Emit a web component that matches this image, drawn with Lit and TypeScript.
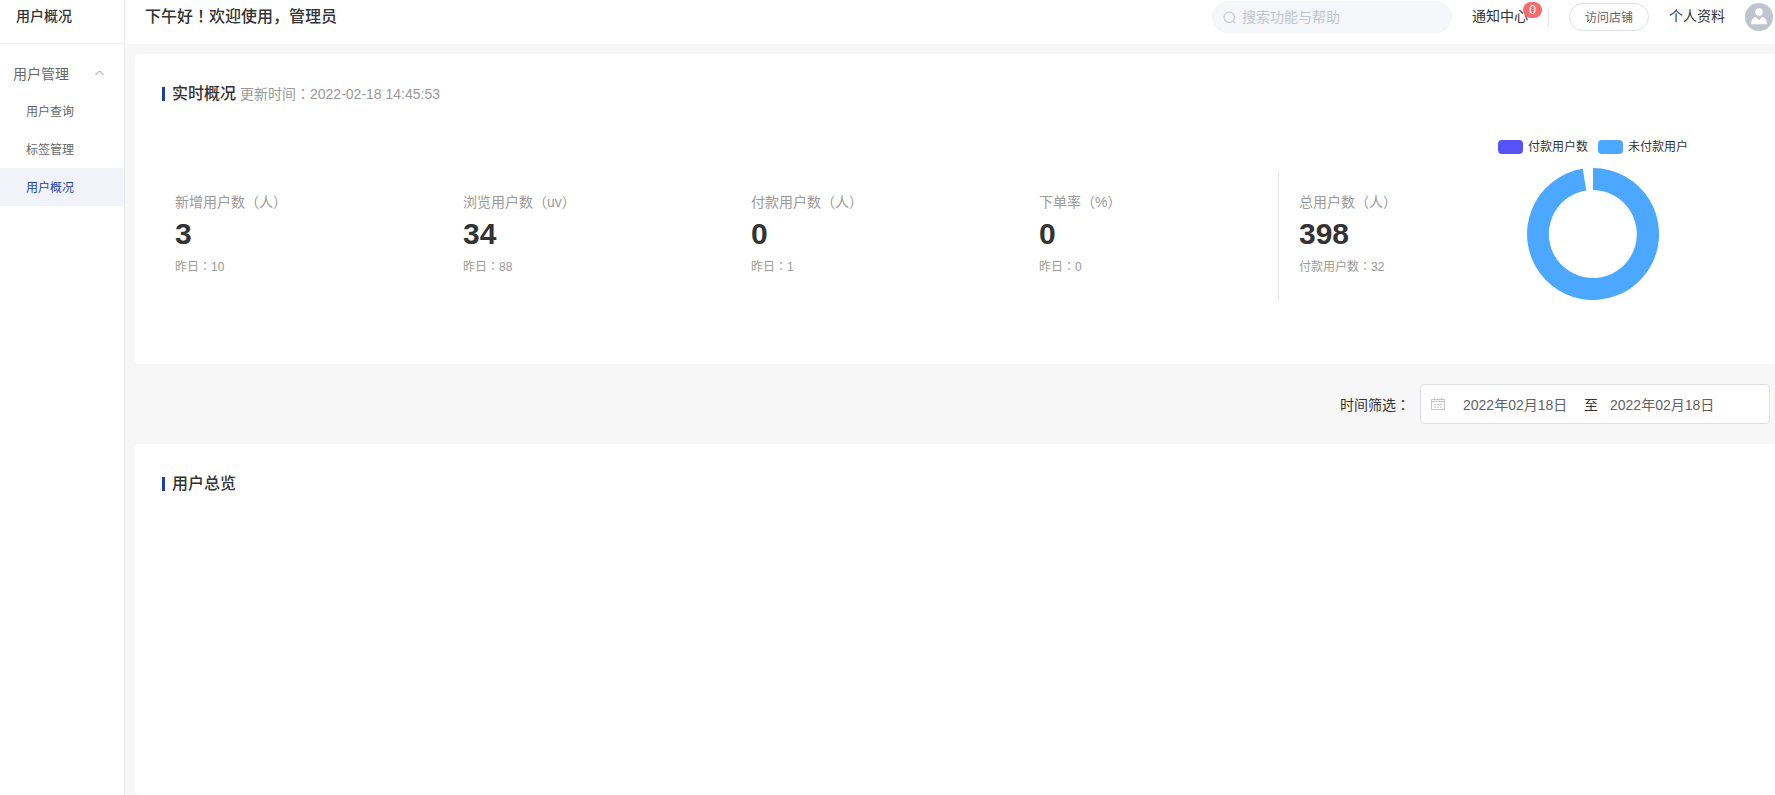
import { LitElement, html, svg, css } from "lit";
import { customElement, property, state } from "lit/decorators.js";
import { classMap } from "lit/directives/class-map.js";

interface Stat {
  label: string;
  value: number;
  note: string;
}

interface Slice {
  name: string;
  value: number;
  color: string;
}

const STATS: Stat[] = [
  { label: "新增用户数（人）", value: 3, note: "昨日：10" },
  { label: "浏览用户数（uv）", value: 34, note: "昨日：88" },
  { label: "付款用户数（人）", value: 0, note: "昨日：1" },
  { label: "下单率（%）", value: 0, note: "昨日：0" },
];

const punctStyles = css`
  .punct {
    font-family: "Noto Sans CJK TC", sans-serif;
    line-height: 1;
  }
`;

/** Sets full-width punctuation in a face that centres it in its cell. */
const centred = (text: string) =>
  text
    .split(/([！：])/)
    .map((part) => (/^[！：]$/.test(part) ? html`<span class="punct">${part}</span>` : part));

@customElement("stat-item")
export class StatItem extends LitElement {
  @property({ attribute: false }) stat!: Stat;

  static styles = [
    punctStyles,
    css`
      :host {
        display: block;
        white-space: nowrap;
        color: #999;
      }
      .label {
        font-size: 14px;
        line-height: 24px;
      }
      .value {
        font-size: 30px;
        line-height: 40px;
        font-weight: 700;
        color: #333;
      }
      .note {
        font-size: 12px;
        line-height: 26px;
      }
    `,
  ];

  render() {
    return html`
      <div class="label">${this.stat.label}</div>
      <div class="value">${this.stat.value}</div>
      <div class="note">${centred(this.stat.note)}</div>
    `;
  }
}

@customElement("ring-chart")
export class RingChart extends LitElement {
  @property({ attribute: false }) slices: Slice[] = [];

  static styles = css`
    :host {
      display: flex;
      flex-direction: column;
      align-items: center;
      gap: 13px;
    }
    .legend {
      display: flex;
      gap: 10px;
      font-size: 12px;
      line-height: 16px;
      color: #333;
      white-space: nowrap;
    }
    .entry {
      display: flex;
      align-items: center;
      gap: 5px;
    }
    .swatch {
      width: 25px;
      height: 14px;
      border-radius: 4px;
    }
    .ring {
      display: block;
      width: 132px;
      height: 132px;
    }
  `;

  render() {
    return html`
      <div class="legend">
        ${this.slices.map(
          (s) => html`<span class="entry"
            ><span class="swatch" style="background:${s.color}"></span>${s.name}</span
          >`
        )}
      </div>
      <svg class="ring" viewBox="-66 -66 132 132" role="img" aria-label="用户占比">
        ${svg`<path fill="#4ca7ff" d="M0 -66A66 66 0 1 1 -10.2 -65.2L-6.8 -43.5A44 44 0 1 0 0 -44Z" />`}
      </svg>
    `;
  }
}

@customElement("side-nav")
export class SideNav extends LitElement {
  @state() private current = "用户概况";
  @state() private open = true;

  static styles = css`
    :host {
      display: block;
      box-sizing: border-box;
      background: #fff;
      border-right: 1px solid #ebebeb;
    }
    .title {
      margin: 0;
      padding: 0 16px 11px;
      font-size: 14px;
      line-height: 32px;
      font-weight: 500;
      color: #333;
      border-bottom: 1px solid #ebebeb;
    }
    .group {
      display: flex;
      align-items: center;
      justify-content: space-between;
      width: 100%;
      margin: 12px 0 0;
      padding: 0 20px 0 13px;
      border: 0;
      background: none;
      font: inherit;
      font-size: 14px;
      line-height: 36px;
      color: #666;
      cursor: pointer;
    }
    .arrow {
      width: 9px;
      height: 9px;
      fill: none;
      stroke: #909399;
    }
    .item {
      display: block;
      padding: 2px 0 0 26px;
      font-size: 12px;
      line-height: 36px;
      color: #666;
      text-decoration: none;
    }
    .active {
      color: #1d3fad;
      background: #f2f3f8;
    }
  `;

  render() {
    return html`
      <h1 class="title">用户概况</h1>
      <button class="group" aria-expanded=${this.open} @click=${() => (this.open = !this.open)}>
        用户管理
        <svg class="arrow" viewBox="0 0 9 9"><path d="M0.5 5 4.5 1 8.5 5" /></svg>
      </button>
      ${this.open
        ? html`<nav>
            ${["用户查询", "标签管理", "用户概况"].map(
              (name) => html`<a
                href="#"
                class=${classMap({ item: true, active: name === this.current })}
                @click=${() => (this.current = name)}
                >${name}</a
              >`
            )}
          </nav>`
        : null}
    `;
  }
}

@customElement("top-bar")
export class TopBar extends LitElement {
  static styles = [
    punctStyles,
    css`
      :host {
        display: flex;
        align-items: center;
        box-sizing: border-box;
        height: 44px;
        padding: 0 2px 10px 20px;
        background: #fff;
        font-size: 14px;
        color: #333;
        white-space: nowrap;
      }
      .hello {
        flex: 1;
        margin: 0;
        font-size: 16px;
        line-height: 32px;
        font-weight: 500;
      }
      .search {
        display: flex;
        align-items: center;
        gap: 6px;
        box-sizing: border-box;
        width: 240px;
        height: 32px;
        padding: 0 11px;
        margin-right: 20px;
        border-radius: 16px;
        background: #f5f7fa;
      }
      .search svg {
        flex: none;
        width: 13px;
        height: 13px;
        fill: none;
        stroke: #c0c4cc;
        stroke-width: 1.1;
      }
      .search input {
        flex: 1;
        min-width: 0;
        padding: 0;
        border: 0;
        outline: 0;
        background: none;
        font: inherit;
        color: #606266;
      }
      .search input::placeholder {
        color: #c0c4cc;
        opacity: 1;
      }
      .link {
        position: relative;
        padding-bottom: 2px;
        line-height: 32px;
        color: #333;
        text-decoration: none;
      }
      .badge {
        position: absolute;
        top: 2px;
        right: -14px;
        padding: 0 6px;
        border-radius: 8px;
        background: #f56c6c;
        color: #fff;
        font-size: 12px;
        line-height: 16px;
      }
      .rule {
        width: 1px;
        height: 20px;
        margin: 0 20px;
        background: #e4e7ed;
      }
      .shop {
        box-sizing: border-box;
        width: 80px;
        height: 28px;
        margin-right: 20px;
        padding: 0 0 2px;
        border: 1px solid #dcdfe6;
        border-radius: 14px;
        background: #fff;
        font: inherit;
        font-size: 12px;
        color: #606266;
      }
      .avatar {
        display: block;
        width: 28px;
        height: 28px;
        margin-left: 20px;
      }
    `,
  ];

  render() {
    return html`
      <h2 class="hello">${centred("下午好！欢迎使用，管理员")}</h2>
      <label class="search">
        <svg viewBox="0 0 13 13"><circle cx="6.3" cy="6.3" r="5.3" /><path d="M10 10.2 12.3 12.3" /></svg>
        <input type="text" aria-label="搜索" placeholder="搜索功能与帮助" />
      </label>
      <a class="link" href="#">通知中心<span class="badge">0</span></a>
      <span class="rule"></span>
      <button class="shop">访问店铺</button>
      <a class="link" href="#">个人资料</a>
      <svg class="avatar" viewBox="0 0 28 28" role="img" aria-label="头像">
        <circle cx="14" cy="14" r="14" fill="#c0c4cc" />
        <circle cx="14" cy="9" r="3.8" fill="#fff" />
        <path fill="#fff" d="M6 21.2C6 17.4 7.6 15 10.6 13.8L14 17.2 17.4 13.8C20.4 15 22 17.4 22 21.2Z" />
      </svg>
    `;
  }
}

@customElement("app-root")
export class AppRoot extends LitElement {
  @state() private from = "2022年02月18日";
  @state() private to = "2022年02月18日";

  static styles = [
    punctStyles,
    css`
      :host {
        display: grid;
        grid-template-columns: 125px minmax(0, 1fr);
        min-height: 100vh;
        background: #f7f7f7;
        color: #333;
        font-family: "Liberation Sans", "Noto Sans CJK SC", sans-serif;
        font-size: 14px;
      }
      .main {
        display: flex;
        flex-direction: column;
      }
      .content {
        flex: 1;
        display: flex;
        flex-direction: column;
        padding: 10px 0 0 10px;
      }
      .card {
        background: #fff;
        border-radius: 4px 0 0 4px;
        padding: 28px 0 0 27px;
      }
      .overview {
        flex: 1;
      }
      .heading {
        display: flex;
        align-items: center;
        gap: 4px;
        height: 24px;
        line-height: 24px;
        color: #999;
      }
      .heading h3 {
        display: flex;
        align-items: center;
        gap: 7px;
        margin: 0;
        font-size: 16px;
        font-weight: 500;
        color: #333;
      }
      .heading h3::before {
        content: "";
        width: 3px;
        height: 14px;
        background: #1d3fad;
      }
      .stats {
        display: grid;
        grid-template-columns: 288fr 288fr 288fr 239fr 497fr;
        align-items: end;
        padding: 33px 0 64px 13px;
      }
      .stats > stat-item {
        padding-bottom: 20px;
      }
      .total {
        display: grid;
        grid-template-columns: 133px minmax(0, 1fr);
        align-items: end;
      }
      .total stat-item {
        padding: 20px 0 20px 20px;
        border-left: 1px solid #e4e7ed;
      }
      .filter {
        display: flex;
        align-items: center;
        justify-content: flex-end;
        gap: 10px;
        padding: 20px 5px 20px 0;
      }
      .range {
        display: flex;
        align-items: center;
        box-sizing: border-box;
        width: 350px;
        height: 40px;
        padding: 0 10px;
        border: 1px solid #dcdfe6;
        border-radius: 4px;
        background: #fff;
      }
      .range svg {
        width: 14px;
        height: 14px;
        margin-right: 18px;
        fill: none;
        stroke: #c0c4cc;
      }
      .range input {
        width: 110px;
        padding: 0;
        border: 0;
        outline: 0;
        background: none;
        font: inherit;
        color: #606266;
      }
      .to {
        margin: 0 12px 0 11px;
      }
    `,
  ];

  render() {
    return html`
      <side-nav></side-nav>
      <div class="main">
        <top-bar></top-bar>
        <main class="content">
          <section class="card">
            <div class="heading">
              <h3>实时概况</h3>
              <span>${centred("更新时间：2022-02-18 14:45:53")}</span>
            </div>
            <div class="stats">
              ${STATS.map((s) => html`<stat-item .stat=${s}></stat-item>`)}
              <div class="total">
                <stat-item
                  .stat=${{ label: "总用户数（人）", value: 398, note: "付款用户数：32" }}
                ></stat-item>
                <ring-chart
                  .slices=${[
                    { name: "付款用户数", value: 0, color: "#5553f7" },
                    { name: "未付款用户", value: 366, color: "#4ca7ff" },
                  ]}
                ></ring-chart>
              </div>
            </div>
          </section>
          <div class="filter">
            <label for="from">${centred("时间筛选：")}</label>
            <div class="range">
              <svg viewBox="0 0 14 14">
                <path d="M0.5 2.5H13.5V12.5H0.5ZM0.5 4.5H13.5M3.5 0.5V3.5M10.5 0.5V3.5" />
                <path stroke-dasharray="2 1" d="M3 7.5H11M3 10H11" />
              </svg>
              <input id="from" type="text" .value=${this.from} />
              <span class="to">至</span>
              <input type="text" aria-label="结束日期" .value=${this.to} />
            </div>
          </div>
          <section class="card overview">
            <div class="heading"><h3>用户总览</h3></div>
          </section>
        </main>
      </div>
    `;
  }
}
